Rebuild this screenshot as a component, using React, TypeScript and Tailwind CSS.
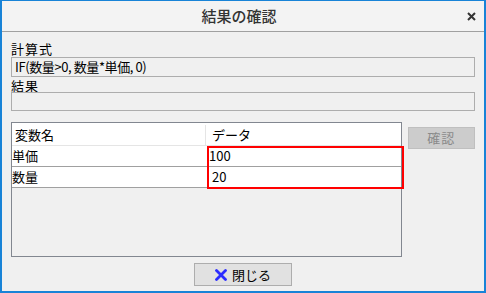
import React from "react";

const rows = [
  { name: "単価", value: "100", indent: false },
  { name: "数量", value: "20", indent: true },
];

const TitleClose = () => (
  <svg width="9" height="9" viewBox="0 0 9 9">
    <path d="M1 1L8 8M8 1L1 8" stroke="#333" strokeWidth="2" />
  </svg>
);

const BlueCross = () => (
  <svg width="12" height="12" viewBox="0 0 12 12">
    <path d="M1.5 1.5L10.5 10.5M10.5 1.5L1.5 10.5" stroke="#2b2bff" strokeWidth="2.8" strokeLinecap="round" />
  </svg>
);

export default function App() {
  return (
    <div className="w-[486px] h-[293px] flex flex-col bg-[#f0f0f0] border-2 border-t border-[#1883d7] font-['Noto_Sans_CJK_JP',sans-serif] text-[13px] text-black">
      {/* title bar */}
      <div className="h-[31px] flex items-center bg-[#f3f3f3] border-b border-[#a0a0a0]">
        <div className="flex-1" />
        <div className="text-[15px] font-medium text-[#333]">結果の確認</div>
        <div className="flex-1 flex justify-end pr-[8px]">
          <TitleClose />
        </div>
      </div>

      <div className="flex-1 flex flex-col px-[9px] pt-[9px]">
        <div className="h-[16px] leading-[16px] tracking-[1px]">計算式</div>
        <div className="h-[20px] border border-[#adadad] flex items-center px-[3px] leading-[16px] tracking-[-0.4px]">
          IF(数量&gt;0, 数量*単価, 0)
        </div>
        <div className="h-[15px] leading-[15px] pt-[1px] tracking-[1px]">結果</div>
        <div className="h-[19px] border border-[#adadad]" />

        <div className="flex gap-[6px] mt-[11px]">
          <div className="w-[394px] h-[135px] border border-[#828790] flex flex-col">
            <div className="h-[23px] flex bg-white border-b border-[#e5e5e5] pt-[2px]">
              <div className="w-[194px] px-[3px] flex items-center border-r border-[#e5e5e5]">変数名</div>
              <div className="flex-1 pl-[6px] flex items-center">データ</div>
            </div>
            <div className="relative">
              {rows.map((r) => (
                <div key={r.name} className="h-[21px] flex bg-white border-b border-[#a0a0a0]">
                  <div className="w-[195px] flex items-center">{r.name}</div>
                  <div className={`flex-1 flex items-center ${r.indent ? "pl-[5px]" : "pl-[2px]"}`}>{r.value}</div>
                </div>
              ))}
              <div className="absolute left-[195px] top-0 w-[197px] h-[43px] border-2 border-[#ff0000]" />
            </div>
          </div>
          <div className="mt-[5px] w-[68px] h-[22px] bg-[#cccccc] border border-[#bfbfbf] flex items-center justify-center text-[#8a8a8a] tracking-[1px]">
            確認
          </div>
        </div>

        <div className="flex justify-center mt-[6px]">
          <div className="w-[98px] h-[23px] bg-[#e1e1e1] border border-[#adadad] flex items-center justify-center gap-[5px]">
            <BlueCross />
            <span>閉じる</span>
          </div>
        </div>
      </div>
    </div>
  );
}
